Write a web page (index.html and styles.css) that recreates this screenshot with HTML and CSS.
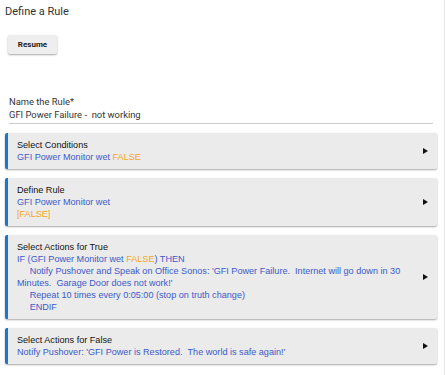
FILE: index.html
```html
<!DOCTYPE html>
<html lang="en">

<head>
    <meta charset="UTF-8">
    <meta name="viewport" content="width=device-width, initial-scale=1.0">
    <title>Define a Rule</title>
    <link rel="stylesheet" href="styles.css">
</head>

<body>
    <div class="page">
        <h3 class="title">Define a Rule</h3>

        <div class="btn-row">
            <button class="btn">Resume</button>
        </div>

        <div class="field">
            <label>Name the Rule*</label>
            <div class="input">GFI Power Failure - &nbsp;not working</div>
        </div>

        <div class="section">
            <div class="text">
                <div class="head">Select Conditions</div>
                <div class="blue">GFI Power Monitor wet <span class="orange">FALSE</span></div>
            </div>
            <span class="arrow"></span>
        </div>

        <div class="section">
            <div class="text">
                <div class="head">Define Rule</div>
                <div class="blue">GFI Power Monitor wet</div>
                <div class="orange">[FALSE]</div>
            </div>
            <span class="arrow"></span>
        </div>

        <div class="section">
            <div class="text">
                <div class="head">Select Actions for True</div>
                <div class="blue">IF (GFI Power Monitor wet <span class="orange">FALSE</span>) THEN</div>
                <div class="blue">&nbsp;&nbsp;&nbsp;&nbsp;&nbsp;Notify Pushover and Speak on Office Sonos: 'GFI Power Failure. &nbsp;Internet will go down in 30 Minutes. &nbsp;Garage Door does not work!'</div>
                <div class="blue">&nbsp;&nbsp;&nbsp;&nbsp;&nbsp;Repeat 10 times every 0:05:00 (stop on truth change)</div>
                <div class="blue">&nbsp;&nbsp;&nbsp;&nbsp;&nbsp;ENDIF</div>
            </div>
            <span class="arrow"></span>
        </div>

        <div class="section">
            <div class="text">
                <div class="head">Select Actions for False</div>
                <div class="blue">Notify Pushover: 'GFI Power is Restored. &nbsp;The world is safe again!'</div>
            </div>
            <span class="arrow"></span>
        </div>
    </div>
</body>

</html>
```

FILE: styles.css
```css
* {
    margin: 0;
    padding: 0;
    box-sizing: border-box;
}

body {
    background: #fff;
    font-family: 'Liberation Sans', Arial, sans-serif;
}

.page {
    width: 445px;
    min-height: 375px;
    border-right: 1px solid #e6e6e6;
    padding: 4px 8px 0 5px;
}

.title {
    font-family: Roboto, sans-serif;
    font-weight: 400;
    font-size: 11px;
    line-height: 16px;
    color: #333;
}

.btn-row {
    padding: 13px 0 0 3px;
}

.btn {
    font-family: Roboto, sans-serif;
    font-size: 8px;
    font-weight: 700;
    color: #222;
    background: #eee;
    border: none;
    border-radius: 2px;
    width: 49px;
    height: 19px;
    box-shadow: 0 1px 2px rgba(0, 0, 0, 0.35);
}

.field {
    margin: 41px 0 0 4px;
    width: 424px;
    border-bottom: 1px solid #ccc;
    padding-bottom: 2px;
}

.field label {
    display: block;
    font-family: Roboto, sans-serif;
    font-size: 9.4px;
    line-height: 13px;
    color: #333;
}

.field .input {
    font-family: Roboto, sans-serif;
    font-size: 9.4px;
    line-height: 13px;
    color: #333;
}

.section {
    display: flex;
    align-items: center;
    width: 432px;
    margin-top: 9px;
    background: #ebebeb;
    border-left: 3px solid #1976d2;
    border-radius: 2px;
    box-shadow: 0 1px 2px rgba(0, 0, 0, 0.35);
    padding: 6px 9px 6px 9px;
}

.text {
    flex: 1;
    font-size: 9.1px;
    line-height: 12px;
    padding-right: 10px;
}

.head {
    color: #111;
}

.blue {
    color: #3c5ac8;
}

.orange {
    color: #f5a623;
}

.arrow {
    width: 0;
    height: 0;
    border-top: 3px solid transparent;
    border-bottom: 3px solid transparent;
    border-left: 5px solid #111;
}
```
